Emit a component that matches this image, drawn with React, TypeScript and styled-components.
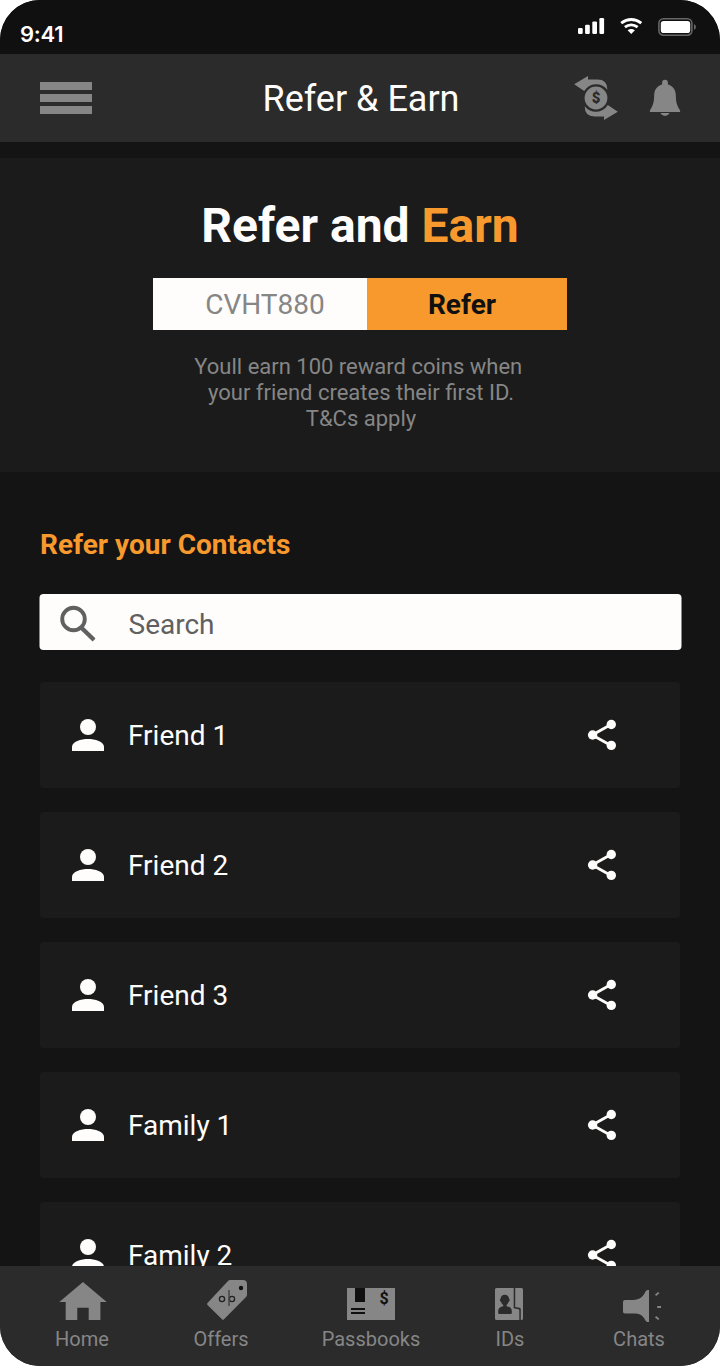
import React from "react";
import styled, { createGlobalStyle } from "styled-components";

const color = {
  page: "#141414",
  status: "#101010",
  bar: "#2b2b2b",
  panel: "#1b1b1b",
  orange: "#f8992d",
  white: "#fefdfb",
  grey: "#868686",
  dark: "#606060",
};

const GlobalStyle = createGlobalStyle`
  * { box-sizing: border-box; }
  body { margin: 0; background: #fff; font-family: Roboto, "Liberation Sans", sans-serif; }
  button, input { font: inherit; border: 0; padding: 0; background: none; }
  svg { display: block; flex: none; }
`;

const Screen = styled.div`
  width: 720px;
  height: 1366px;
  display: flex;
  flex-direction: column;
  overflow: hidden;
  border-radius: 40px;
  background: ${color.page};
`;

const StatusBar = styled.div`
  flex: none;
  height: 54px;
  padding: 18px 24px 0 20px;
  display: flex;
  justify-content: space-between;
  background: ${color.status};
`;

const Time = styled.span`
  margin-top: 3px;
  font: 600 22px/26px Inter, sans-serif;
  letter-spacing: -0.25px;
  color: #fff;
`;

const StatusIcons = styled.div`
  display: flex;
  gap: 15px;
`;

const Header = styled.header`
  flex: none;
  height: 88px;
  padding: 0 39px 0 40px;
  display: grid;
  grid-template-columns: 108px 1fr 107px;
  align-items: center;
  background: ${color.bar};
`;

const MenuButton = styled.button`
  width: 52px;
  display: flex;
  flex-direction: column;
  gap: 4px;
`;

const MenuBar = styled.span`
  height: 8px;
  background: ${color.grey};
`;

const Title = styled.h1`
  margin: 2px 0 0;
  text-align: center;
  font-size: 36px;
  line-height: 42px;
  font-weight: 400;
  color: ${color.white};
`;

const HeaderActions = styled.div`
  display: flex;
  justify-content: flex-end;
  align-items: flex-end;
  gap: 31px;
`;

const Hero = styled.section`
  flex: none;
  height: 314px;
  margin-top: 16px;
  padding-top: 40px;
  display: flex;
  flex-direction: column;
  align-items: center;
  background: ${color.panel};
`;

const HeroTitle = styled.h2`
  margin: 0;
  font-size: 48px;
  line-height: 56px;
  font-weight: 700;
  color: ${color.white};
`;

const Accent = styled.span`
  color: ${color.orange};
`;

const CodeRow = styled.div`
  display: flex;
  height: 52px;
  margin-top: 24px;
  font-size: 28px;
  line-height: 52px;
`;

const Code = styled.div`
  width: 214px;
  padding: 1px 0 0 10px;
  text-align: center;
  background: ${color.white};
  color: ${color.grey};
`;

const ReferButton = styled.button`
  width: 200px;
  padding: 1px 10px 0 0;
  font-weight: 700;
  text-align: center;
  background: ${color.orange};
  color: #101010;
`;

const Terms = styled.p`
  margin: 24px 0 0 2px;
  white-space: pre;
  text-align: center;
  font-size: 22px;
  line-height: 26px;
  color: ${color.grey};
`;

const Contacts = styled.main`
  flex: 1;
  min-height: 0;
  overflow: hidden;
  padding: 56px 40px 0;
`;

const SectionTitle = styled.h3`
  margin: 0;
  font-size: 28px;
  line-height: 33px;
  font-weight: 700;
  color: ${color.orange};
`;

const SearchBox = styled.label`
  display: flex;
  align-items: center;
  gap: 32px;
  height: 56px;
  margin: 33px -2px 32px 0;
  padding: 2px 20px 0;
  border-radius: 4px;
  background: ${color.white};
  transform: translateX(-0.5px);
`;

const SearchInput = styled.input`
  flex: 1;
  min-width: 0;
  height: 34px;
  margin: 2px 0 0 1px;
  outline: 0;
  font-size: 28px;
  color: ${color.dark};
  &::placeholder { color: ${color.dark}; opacity: 1; }
`;

const List = styled.div`
  display: flex;
  flex-direction: column;
  gap: 24px;
`;

const Card = styled.article`
  display: flex;
  align-items: center;
  height: 106px;
  padding: 0 63px 0 32px;
  border-radius: 4px;
  background: ${color.panel};
`;

const Name = styled.span`
  flex: 1;
  margin: 2px 0 0 24px;
  font-size: 28px;
  line-height: 34px;
  color: ${color.white};
`;

const Nav = styled.nav`
  flex: none;
  height: 100px;
  padding-top: 12px;
  display: grid;
  grid-template-columns: 164px 114px 186px 92px 166px;
  background: ${color.bar};
`;

const NavItem = styled.a`
  display: flex;
  flex-direction: column;
  align-items: center;
  gap: 3px;
  font-size: 20px;
  line-height: 24px;
  color: ${color.grey};
`;

const Signal = () => (
  <svg width="27" height="16" viewBox="0 0 27 16" fill="#fff">
    <rect x="0" y="10" width="4.7" height="6" rx="1.2" />
    <rect x="7.1" y="6.8" width="4.7" height="9.2" rx="1.2" />
    <rect x="14.3" y="3.4" width="4.7" height="12.6" rx="1.2" />
    <rect x="21.4" y="0" width="4.7" height="16" rx="1.2" />
  </svg>
);

const Wifi = () => (
  <svg width="23" height="16" viewBox="0 0 23 16" fill="none" stroke="#fff" strokeWidth="2.9">
    <path d="M1.2 5.2Q6 1.45 11.25 1.45T21.3 5.2" />
    <path d="M4.9 9.2Q7.8 6.9 11.25 6.9T17.6 9.2" />
    <path d="M11.25 16L7.6 12.3Q11.25 9.9 14.9 12.3Z" fill="#fff" stroke="none" />
  </svg>
);

const Battery = () => (
  <svg width="38" height="18" viewBox="0 0 38 18">
    <rect x="0.9" y="0.8" width="33" height="16.4" rx="4.6" fill="none" stroke="#666" strokeWidth="1.6" />
    <path d="M36 6v6q2-.8 2-3t-2-3Z" fill="#666" />
    <rect x="2.8" y="2.9" width="29.4" height="12.2" rx="2.8" fill="#fff" />
  </svg>
);

const CoinCycle = () => (
  <svg width="44" height="44" viewBox="34 76 44 44" fill={color.grey}>
    <path d="M34.2 84.3L48 76V79.5H57.5Q67.5 79.5 67.3 89.7A14 14 0 0 0 44.2 91Z" />
    <path d="M77.8 111.7L64 120V116.5H54.5Q44.7 116.5 44.7 106.3A14 14 0 0 0 67.8 105Z" />
    <circle cx="56" cy="98" r="11.4" />
    <text x="56" y="103.2" textAnchor="middle" fontFamily="Roboto" fontSize="15" fontWeight="900" fill={color.bar}>$</text>
  </svg>
);

const Bell = () => (
  <svg width="32" height="41" viewBox="0 0 32 41" fill={color.grey}>
    <path d="M16 .7C14 .7 13.1 2 13.1 3.6V5.4C8.2 6.7 5.5 10.5 5.2 15.5C5 22 4.9 25 .9 31.5V33H31.1V31.5C27.1 25 27 22 26.8 15.5C26.5 10.5 23.8 6.7 18.9 5.4V3.6C18.9 2 18 .7 16 .7Z" />
    <path d="M11.3 34H20.7Q19 37 16 37T11.3 34Z" />
  </svg>
);

const SearchIcon = () => (
  <svg width="36" height="37" viewBox="0 0 36 37" fill="none" stroke={color.dark} strokeWidth="3.9">
    <circle cx="14" cy="14" r="11.3" />
    <path d="M22.2 23L34.6 35" strokeWidth="4.4" />
  </svg>
);

const Person = () => (
  <svg width="32" height="32" viewBox="0 0 32 32" fill={color.white}>
    <circle cx="16" cy="8" r="8" />
    <path d="M0 32V28C0 22.5 9 20 16 20S32 22.5 32 28V32Z" />
  </svg>
);

const Share = () => (
  <svg width="30" height="32" viewBox="0 0 30 32" fill={color.white}>
    <path d="M24 5.5L5.2 16L24 26.5" fill="none" stroke={color.white} strokeWidth="2.8" />
    <circle cx="5.6" cy="16" r="4.7" />
    <circle cx="24.3" cy="5.5" r="4.7" />
    <circle cx="24.3" cy="26.4" r="4.7" />
  </svg>
);

const NavIcon = ({ children }: { children: React.ReactNode }) => (
  <svg width="60" height="46" viewBox="0 0 60 46" fill={color.grey}>{children}</svg>
);

const Home = () => (
  <NavIcon>
    <path d="M31 4L54.7 24H48.4V42H36.7V29.7H25.3V42H13.7V24H7.3Z" />
  </NavIcon>
);

const Offers = () => (
  <NavIcon>
    <path d="M38.8 2H52Q56 2 56 6V16.5Q56 18 55 19L33 41.3Q32 42.3 31 41.3L16.5 27Q15.5 26 16.5 25L37 3Q38 2 38.8 2Z" />
    <circle cx="50" cy="10" r="2.2" fill="#101010" />
    <g fill="none" stroke="#202020">
      <circle cx="31" cy="21" r="2.6" strokeWidth="1.3" />
      <circle cx="41" cy="21" r="2.6" strokeWidth="1.3" />
      <path d="M38 12V28" strokeWidth="1.5" stroke="#444" />
    </g>
  </NavIcon>
);

const Passbooks = () => (
  <NavIcon>
    <path d="M6 10H54V42H6Z" />
    <path d="M14 10H24V24H14ZM10 30H24V32H10ZM10 34H24V36H10Z" fill="#101010" />
    <text x="43" y="25.8" textAnchor="middle" fontFamily="Roboto" fontSize="16" fontWeight="700" fill="#101010">$</text>
  </NavIcon>
);

const Ids = () => (
  <NavIcon>
    <path d="M16.5 10H33.7V30.3L38.5 31.2Q39.3 31.5 39.3 32.5V42H16.5Q15 42 15 40.5V11.5Q15 10 16.5 10Z" />
    <path d="M35.2 10H41.5Q43 10 43 11.5V40.5Q43 42 41.3 42H40.8V31.5Q40.8 30 39.5 29.8L35.2 29Z" />
    <path
      d="M24.8 16.8C27.5 16.8 29 18.5 29 20.8C30.2 21.2 29.8 23.3 28.6 23.7C28.2 25.3 27.3 26.3 26.6 26.8V28.3C29.5 28.8 31.7 30 31.8 33V35Q31.8 36 30.8 36H19.2Q18.2 36 18.2 35V33C18.3 30 20.3 28.8 23.2 28.3V26.8C22.3 26.3 21.4 25.3 21 23.7C19.8 23.3 19.4 21.2 20.6 20.8C20.6 18.5 22.1 16.8 24.8 16.8Z"
      fill={color.bar}
    />
  </NavIcon>
);

const Chats = () => (
  <NavIcon>
    <path d="M16 22H24C31 22 34.5 18 36.5 13.5Q37.5 11.8 39 12H40V44H38.5Q37 44 36.3 42.3C34 37.5 31 35.6 24 35.6H16Q14 35.6 14 33.8V24Q14 22 16 22Z" />
    <path d="M46.6 17.2L49.8 14.6M48.2 29H52M46.6 38.8L49.8 41.4" fill="none" stroke={color.grey} strokeWidth="1.8" />
  </NavIcon>
);

const contacts = ["Friend 1", "Friend 2", "Friend 3", "Family 1", "Family 2"];

const tabs = [
  { label: "Home", Icon: Home },
  { label: "Offers", Icon: Offers },
  { label: "Passbooks", Icon: Passbooks },
  { label: "IDs", Icon: Ids },
  { label: "Chats", Icon: Chats },
];

export default function App() {
  return (
    <>
      <GlobalStyle />
      <Screen>
        <StatusBar>
          <Time>9:41</Time>
          <StatusIcons>
            <Signal />
            <Wifi />
            <Battery />
          </StatusIcons>
        </StatusBar>
        <Header>
          <MenuButton aria-label="Menu">
            <MenuBar />
            <MenuBar />
            <MenuBar />
          </MenuButton>
          <Title>Refer &amp; Earn</Title>
          <HeaderActions>
            <CoinCycle />
            <Bell />
          </HeaderActions>
        </Header>
        <Hero>
          <HeroTitle>
            Refer and <Accent>Earn</Accent>
          </HeroTitle>
          <CodeRow>
            <Code>CVHT880</Code>
            <ReferButton>Refer</ReferButton>
          </CodeRow>
          <Terms>{"Youll earn 100 reward coins when \nyour friend creates their first ID.\nT&Cs apply"}</Terms>
        </Hero>
        <Contacts>
          <SectionTitle>Refer your Contacts</SectionTitle>
          <SearchBox>
            <SearchIcon />
            <SearchInput placeholder="Search" />
          </SearchBox>
          <List>
            {contacts.map((name) => (
              <Card key={name}>
                <Person />
                <Name>{name}</Name>
                <Share />
              </Card>
            ))}
          </List>
        </Contacts>
        <Nav>
          {tabs.map(({ label, Icon }) => (
            <NavItem key={label}>
              <Icon />
              {label}
            </NavItem>
          ))}
        </Nav>
      </Screen>
    </>
  );
}
